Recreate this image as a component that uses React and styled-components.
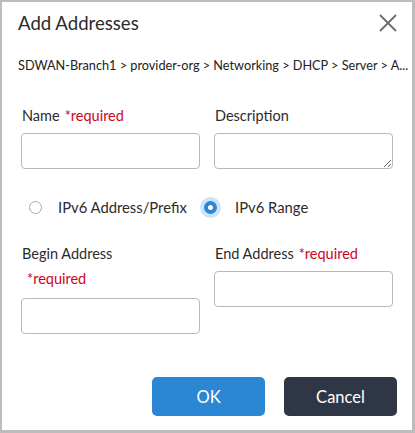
import React, { useState } from 'react';
import styled, { createGlobalStyle } from 'styled-components';

const Global = createGlobalStyle`
  html, body { margin: 0; padding: 0; background: #fff; }
  body { font-family: Lato, "Open Sans", sans-serif; color: #2b2b2b; }
  * { box-sizing: border-box; }
`;

const Frame = styled.div`
  width: 415px;
  height: 433px;
  border: 2px solid #bdbdbd;
  border-right-width: 3px;
  border-bottom-width: 3px;
  background: #fff;
  display: flex;
  flex-direction: column;
`;

const Header = styled.div`
  display: flex;
  align-items: center;
  justify-content: space-between;
  padding: 7px 14px 0 16px;
  height: 34px;
`;

const Title = styled.h1`
  margin: 0;
  font-size: 18.6px;
  font-weight: 400;
  color: #2b2b2b;
`;

const Close = styled.button`
  all: unset;
  width: 20px;
  height: 20px;
  display: flex;
  align-items: center;
  justify-content: center;
  cursor: pointer;
`;

const Crumbs = styled.div`
  margin: 21px 16px 0 16px;
  font-size: 12.7px;
  line-height: 16px;
  white-space: nowrap;
  color: #222;
`;

const Body = styled.div`
  padding: 0 18px 0 19px;
  display: grid;
  grid-template-columns: 179px 179px;
  column-gap: 14px;
`;

const Field = styled.div`
  display: flex;
  flex-direction: column;
  margin-top: ${p => p.top || 0}px;
`;

const Label = styled.label`
  font-size: 14.5px;
  line-height: 18px;
  color: #2b2b2b;
  display: flex;
  flex-wrap: wrap;
  column-gap: 5px;
  padding-left: 1px;
`;

const Req = styled.span`
  color: #d0021b;
  ${p => p.block && `
    flex-basis: 100%;
    padding-left: 5px;
    margin-top: 7px;
  `}
`;

const Input = styled.input`
  width: 179px;
  height: 36px;
  margin-top: ${p => p.gap || 8}px;
  border: 1px solid #b9b9b9;
  border-radius: 4px;
  outline: none;
  font: inherit;
  padding: 0 8px;
`;

const Area = styled.textarea`
  width: 179px;
  height: 36px;
  margin-top: 8px;
  border: 1px solid #b9b9b9;
  border-radius: 4px;
  outline: none;
  font: inherit;
  resize: vertical;
  display: block;
`;

const RadioRow = styled.div`
  grid-column: 1 / span 2;
  display: flex;
  align-items: center;
  margin-top: 28px;
  margin-bottom: 28px;
  height: 20px;
  padding-left: 8px;
`;

const RadioItem = styled.label`
  display: flex;
  align-items: center;
  font-size: 14.8px;
  color: #2b2b2b;
  cursor: pointer;
  width: ${p => (p.w ? `${p.w}px` : 'auto')};
`;

const Dot = styled.span`
  width: 13px;
  height: 13px;
  border-radius: 50%;
  margin-right: ${p => p.gap}px;
  flex-shrink: 0;
  border: ${p => (p.on ? '4px solid #2b87d3' : '1px solid #a9a9a9')};
  box-shadow: ${p => (p.on ? '0 0 0 4px #cfe4f6' : 'none')};
  background: #fff;
`;

const Footer = styled.div`
  margin-top: auto;
  display: flex;
  justify-content: flex-end;
  gap: 19px;
  padding: 0 15px 14px 0;
`;

const Btn = styled.button`
  all: unset;
  width: 113px;
  height: 39px;
  border-radius: 5px;
  display: flex;
  align-items: center;
  justify-content: center;
  font-family: Lato, sans-serif;
  font-size: 16.5px;
  color: #fff;
  background: ${p => (p.dark ? '#2f3746' : '#2b87d3')};
  cursor: pointer;
`;

export default function App() {
  const [mode, setMode] = useState('range');
  return (
    <>
      <Global />
      <Frame>
        <Header>
          <Title>Add Addresses</Title>
          <Close aria-label="close">
            <svg width="18" height="18" viewBox="0 0 18 18">
              <path d="M1 1 L17 17 M17 1 L1 17" stroke="#6b6b6b" strokeWidth="1.8" />
            </svg>
          </Close>
        </Header>
        <Crumbs>SDWAN-Branch1 &gt; provider-org &gt; Networking &gt; DHCP &gt; Server &gt; A...</Crumbs>
        <Body>
          <Field top={34}>
            <Label>Name <Req>*required</Req></Label>
            <Input />
          </Field>
          <Field top={34}>
            <Label>Description</Label>
            <Area />
          </Field>
          <RadioRow>
            <RadioItem w={175} onClick={() => setMode('prefix')}>
              <Dot gap={16} on={mode === 'prefix'} />IPv6 Address/Prefix
            </RadioItem>
            <RadioItem onClick={() => setMode('range')}>
              <Dot gap={18} on={mode === 'range'} />IPv6 Range
            </RadioItem>
          </RadioRow>
          <Field>
            <Label>Begin Address <Req block>*required</Req></Label>
            <Input gap={10} />
          </Field>
          <Field>
            <Label>End Address <Req>*required</Req></Label>
            <Input gap={8} />
          </Field>
        </Body>
        <Footer>
          <Btn>OK</Btn>
          <Btn dark>Cancel</Btn>
        </Footer>
      </Frame>
    </>
  );
}
